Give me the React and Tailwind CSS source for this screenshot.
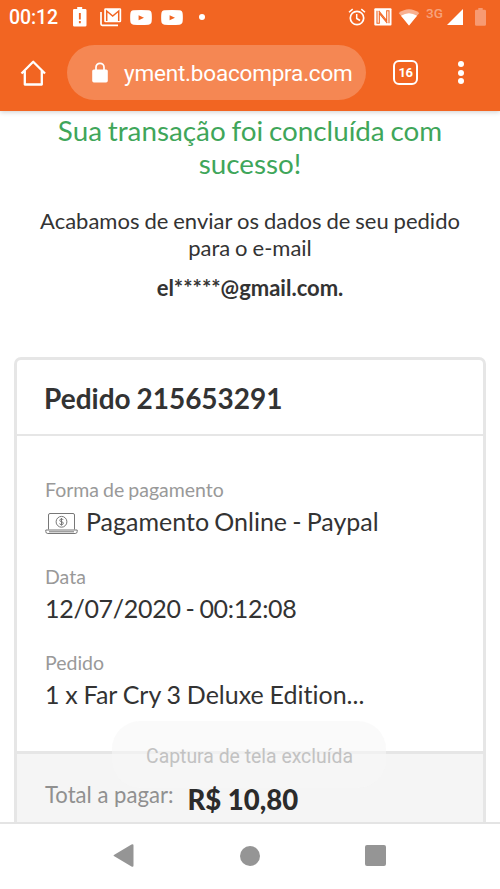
const YoutubeIcon = ({ className }) => (
  <svg viewBox="0 0 22 15" className={`h-[15px] w-[22px] shrink-0 ${className}`}>
    <path fill="#fff" fillRule="evenodd" d="M3.5.3Q11-.3 18.500.3Q21.600.5 21.700 4Q22 7.500 21.700 11Q21.500 14.400 18.500 14.700Q11 15.300 3.500 14.700Q.4 14.400.3 11Q0 7.500.3 4Q.4.500 3.500.3zM8.600 5.200v5l5.400-2.500z" />
  </svg>
)

const StatusBar = () => (
  <div className="flex h-[34px] items-center pl-[9px] font-['Roboto',sans-serif] text-white">
    <span className="mt-px w-[49px] text-[19.5px] leading-none font-medium tracking-[-0.1px] whitespace-nowrap">00:12</span>

    {/* battery alert */}
    <svg viewBox="0 0 14 20" className="ml-[15px] h-5 w-3.5 shrink-0">
      <path fill="#fff" fillRule="evenodd" d="M4.200 0h5v2h3q1.300 0 1.300 1.300v15q0 1.300-1.300 1.300h-11Q0 19.600 0 18.300v-15Q0 2 1.200 2h3zM5.900 6v6.500h1.900V6zM5.900 14v2.200h1.900V14z" />
    </svg>

    {/* gmail stack */}
    <svg viewBox="0 0 22 19" className="ml-[13px] h-[19px] w-[22px] shrink-0">
      <path d="M1 4v12q0 1.300 1.300 1.300H18" fill="none" stroke="#fff" strokeWidth="1.700" />
      <rect x="4.200" y=".3" width="17" height="14" rx="1.300" fill="#fff" />
      <path d="M6.700 13V3l6 5 6-5v10" fill="none" stroke="#f26522" strokeWidth="1.500" />
    </svg>

    <YoutubeIcon className="ml-2" />
    <YoutubeIcon className="ml-[9px]" />
    <span className="ml-[16px] size-[6px] rounded-full bg-white" />

    {/* alarm */}
    <svg viewBox="0 0 18 18" className="ml-[143px] h-[18px] w-[18px] shrink-0" fill="none" stroke="#fff" strokeWidth="1.700">
      <circle cx="9" cy="10" r="6.700" />
      <path d="M8.700 6v4.500l3.300 2M1 4.200l3.700-3.100M17 4.200l-3.700-3.100" strokeWidth="1.500" />
    </svg>

    {/* nfc */}
    <svg viewBox="0 0 18 18" className="ml-[8px] h-[18px] w-[18px] shrink-0">
      <rect x=".3" y=".3" width="17.200" height="17.200" rx="1" fill="#fff" />
      <path d="M3 2.800v12.500h2.300V5.500l8 9.700M15 15.200V2.800h-2.300v9.700l-8-9.700" fill="none" stroke="#f26522" strokeWidth="1.100" />
    </svg>

    {/* wifi */}
    <svg viewBox="0 0 22 17" className="ml-[6px] h-[17px] w-[22px] shrink-0">
      <path fill="#f9b090" d="M.7 4Q11-3.500 21.300 4L11 16.500z" />
      <path fill="#fff" d="M3 6.800Q11 1.800 19 6.800L11 16.500z" />
    </svg>

    <span className="mb-[7px] ml-[6px] w-[20px] text-[13.500px] leading-none font-medium text-[#f7a27c]">3G</span>

    {/* signal */}
    <svg viewBox="0 0 16 16" className="ml-[1px] size-4 shrink-0">
      <path d="M16 0v16H0z" fill="#fff" />
    </svg>

    {/* battery level */}
    <svg viewBox="0 0 11 18" className="ml-[12px] h-[18px] w-[11px] shrink-0">
      <path fill="#f79a72" d="M3.300 0h4.400v1.700h2q1.300 0 1.300 1.300v13.500q0 1.300-1.300 1.300H1.300Q0 17.800 0 16.500V3q0-1.300 1.300-1.300h2z" />
    </svg>
  </div>
)

const BrowserBar = () => (
  <div className="flex h-[77px] items-center pl-5 font-['Roboto',sans-serif] text-white">
    <svg viewBox="0 0 26 26" className="h-[26px] w-[26px] shrink-0" fill="none" stroke="#fff" strokeWidth="2.300" strokeLinejoin="round">
      <path d="M1.500 13.500 13.200 1.800 25 13.500M4.800 11v13.500h17V11" />
    </svg>

    <div className="ml-[21px] flex h-[55px] w-[299px] items-center rounded-full bg-[#f58753] pl-[25px]">
      <svg viewBox="0 0 16 21" className="h-[21px] w-4 shrink-0">
        <path d="M4 9V5.300a4 4 0 0 1 8 0V9" fill="none" stroke="#fff" strokeWidth="1.700" />
        <rect x=".2" y="7.400" width="15.600" height="13" rx="1.700" fill="#fff" />
      </svg>
      <span className="mt-px ml-4 text-[22.500px] leading-none tracking-[-0.200px] whitespace-nowrap">yment.boacompra.com</span>
    </div>

    <div className="ml-[27px] flex size-[25px] items-center justify-center rounded-[6px] border-2 border-white text-[13px] leading-none font-bold tracking-[-0.500px]">
      16
    </div>

    <div className="ml-[40px] flex flex-col gap-[2.500px]">
      <span className="size-[6px] rounded-full bg-white" />
      <span className="size-[6px] rounded-full bg-white" />
      <span className="size-[6px] rounded-full bg-white" />
    </div>
  </div>
)

const LaptopIcon = () => (
  <svg viewBox="0 0 33 23" className="mt-[5px] h-[23px] w-[33px] shrink-0" fill="none" stroke="#777" strokeWidth="1">
    <path d="M3.500 17.500V3q0-1.500 1.500-1.500h23q1.500 0 1.500 1.500v14.500" />
    <path d="M.8 18h31.400v1.500q0 2-2 2H2.800q-2 0-2-2zM4 19.800h25" />
    <circle cx="16.500" cy="9.800" r="5.400" />
    <path d="M18.300 8q-.5-1-1.800-1-1.700 0-1.700 1.300t1.700 1.400 1.800 1.500-1.800 1.400-1.900-1.100M16.500 6v7.600" />
  </svg>
)

const Field = ({ label, className = '[word-spacing:-1.200px]', children }) => (
  <div className="h-[86.500px]">
    <div className="text-[19.500px] leading-[26px] [word-spacing:-1px] text-[#999]">{label}</div>
    <div className={`mt-px flex h-[34px] items-center text-[25px] leading-[34px] whitespace-nowrap ${className}`}>
      {children}
    </div>
  </div>
)

const NavBar = () => (
  <div className="flex h-[65px] items-center bg-white pb-[2px] pl-[113px]">
    <svg viewBox="0 0 21 23" className="h-[23px] w-[21px] shrink-0">
      <path fill="#959595" d="M1.300 10.700 18.500.6q2-.9 2 1v19.800q0 1.900-2 1L1.300 12.300q-1.500-.8 0-1.600z" />
    </svg>
    <span className="ml-[106px] size-[20px] rounded-full bg-[#959595]" />
    <span className="ml-[105px] size-[21px] rounded-[2px] bg-[#959595]" />
  </div>
)

export default function App() {
  return (
    <div className="flex h-[889px] w-[500px] flex-col overflow-hidden bg-white">
      <header className="relative z-10 h-[111px] shrink-0 bg-[#f26522] shadow-[0_1px_5px_rgba(0,0,0,0.2)]">
        <StatusBar />
        <BrowserBar />
      </header>

      <main className="relative h-[713px] shrink-0 overflow-hidden border-b-2 border-[#e4e4e4] font-['Lato',sans-serif] text-[#333] [font-variant-ligatures:none]">
        <div className="pt-[3px] text-center">
          <h1 className="text-[27.800px] leading-[33px] [word-spacing:-1.300px] text-[#3fa65a]">
            Sua transação foi concluída com
            <br />
            sucesso!
          </h1>
          <p className="mt-[28px] text-[22px] leading-[26.500px] [word-spacing:-0.700px]">
            Acabamos de enviar os dados de seu pedido
            <br />
            para o e-mail
          </p>
          <p className="mt-[14px] text-[22px] leading-[26px] font-bold">el*****@gmail.com.</p>
        </div>

        <section className="mx-[14px] mt-[56px] rounded-t-[7px] border-[3px] border-b-0 border-[#e6e6e6]">
          <h2 className="h-[76px] border-b-2 border-[#e6e6e6] pl-[27px] text-[28px] leading-[76px] font-bold [word-spacing:-1px]">Pedido 215653291</h2>
          <div className="h-[315px] pt-[41px] pl-[28px]">
            <Field label="Forma de pagamento">
              <LaptopIcon />
              <span className="ml-2">Pagamento Online - Paypal</span>
            </Field>
            <Field label="Data" className="tracking-[-0.300px] [word-spacing:-1.200px]">12/07/2020 - 00:12:08</Field>
            <Field label="Pedido" className="[word-spacing:-0.600px]">1 x Far Cry 3 Deluxe Edition...</Field>
          </div>
          <div className="flex h-[90px] items-start border-t-[3px] border-[#e6e6e6] bg-[#f5f5f5] pt-[26px] pl-[28px]">
            <span className="text-[22.100px] leading-[30px] text-[#909090]">Total a pagar:</span>
            <span className="relative z-10 mt-[5px] ml-[14px] text-[27.500px] leading-[30px] font-black text-[#2b2b2b]">R$ 10,80</span>
          </div>
        </section>

        {/* fading toast */}
        <div className="absolute top-[610px] left-[112px] flex h-[67px] w-[274px] items-center justify-center rounded-[28px] bg-[#f7f7f7]/60 pt-[4px] pl-px font-['Roboto',sans-serif] text-[19.400px] whitespace-nowrap text-[#c2c2c2]">
          Captura de tela excluída
        </div>
      </main>

      <NavBar />
    </div>
  )
}
